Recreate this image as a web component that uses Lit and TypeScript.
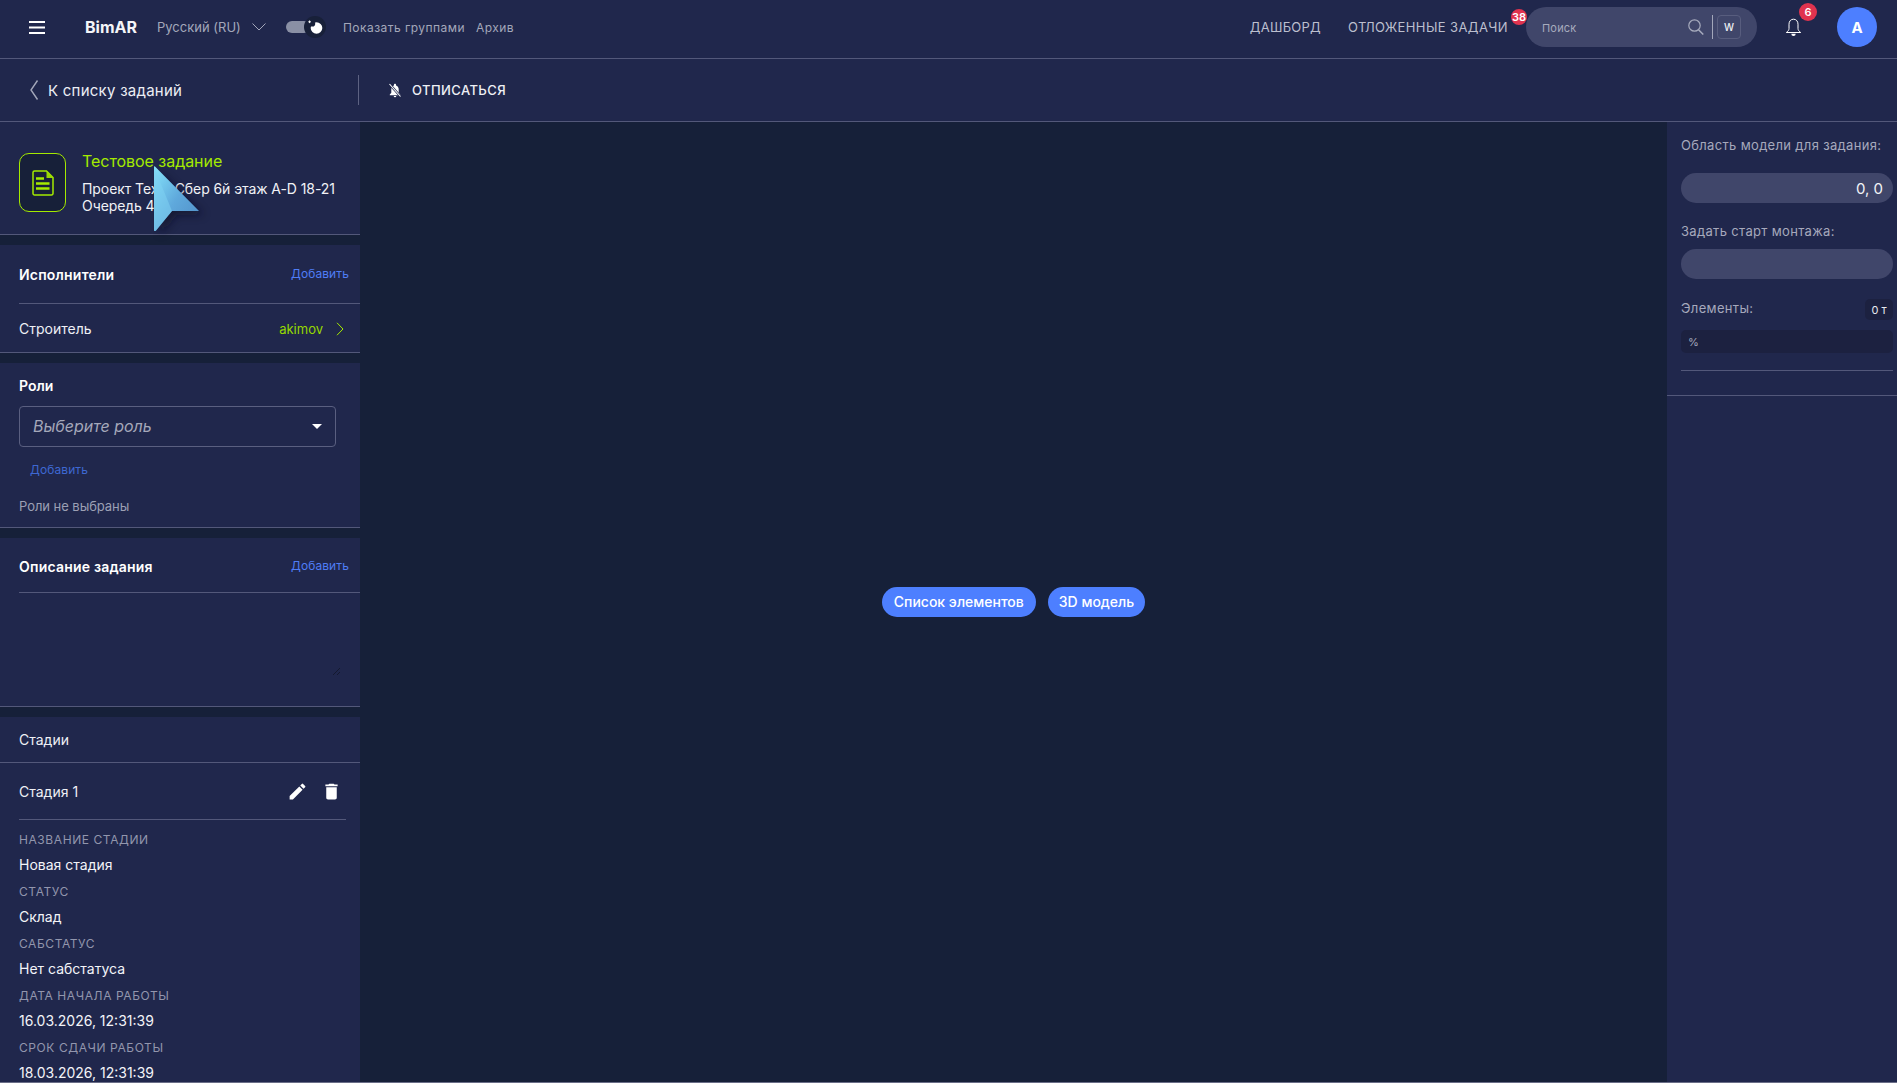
import { LitElement, html, css } from "lit";
import { customElement } from "lit/decorators.js";

@customElement("app-root")
export class AppRoot extends LitElement {
  static styles = css`
    :host { display: block; height: 1083px; overflow: hidden; position: relative; background: #162039; color: #fff; font-family: Inter, "Noto Sans", sans-serif; --panel: #20274c; --line: #53587a; --muted: #a3a7ba; --lime: #a4ea00; --blue: #4d7fff; }
    * { box-sizing: border-box; }
    svg { display: block; flex: none; }
    .top { height: 59px; background: var(--panel); border-bottom: 1px solid var(--line); display: flex; align-items: center; padding: 0 20px 4px 29px; }
    .brand { font-size: 16px; font-weight: 700; margin-left: 40px; width: 72px; color: #f4f5f8; }
    .lang { font-size: 13px; color: var(--muted); width: 95px; }
    .toggle { margin-left: 20px; width: 40px; height: 22px; position: relative; }
    .track { position: absolute; left: 0; top: 5px; width: 24px; height: 12px; border-radius: 6px; background: #8a90a5; }
    .knob { position: absolute; left: 18px; top: 0; width: 22px; height: 22px; border-radius: 50%; background: #182039; display: flex; align-items: center; justify-content: center; }
    .tl { font-size: 12px; color: var(--muted); letter-spacing: .45px; white-space: nowrap; }
    .tl.a { margin-left: 17px; } .tl.b { margin-left: 11px; }
    .sp { flex: 1; }
    .nav { font-size: 13px; color: #bcbfce; letter-spacing: .25px; white-space: nowrap; }
    .nav.two { margin-left: 27px; position: relative; letter-spacing: .4px; }
    .badge { position: absolute; background: #e0334f; color: #fff; font-weight: 600; border-radius: 50%; display: flex; align-items: center; justify-content: center; }
    .b38 { width: 16px; height: 16px; font-size: 11px; right: -19px; top: -10px; letter-spacing: 0; }
    .search { margin-left: 18px; width: 231px; height: 40px; border-radius: 20px; background: #40466a; display: flex; align-items: center; padding: 0 16px 0 16px; }
    .search span { font-size: 11px; color: #a7abbd; flex: 1; letter-spacing: .2px; padding-top: 2px; }
    .vr { width: 1px; height: 24px; background: #a3a7ba; margin: 0 4px 0 8px; }
    .w { width: 24px; height: 24px; border: 1px solid #585d7e; border-radius: 4px; font-size: 10px; font-weight: 500; display: flex; align-items: center; justify-content: center; color: #eceef3; }
    .bell { margin-left: 25px; position: relative; width: 22px; }
    .b6 { width: 18px; height: 18px; font-size: 11px; left: 17px; top: -15px; }
    .av { margin-left: 33px; width: 40px; height: 40px; border-radius: 50%; background: var(--blue); display: flex; align-items: center; justify-content: center; font-size: 15px; font-weight: 700; }
    .sub { height: 63px; background: var(--panel); border-bottom: 1px solid var(--line); display: flex; align-items: center; padding-left: 29px; }
    .back { display: flex; align-items: center; gap: 9px; width: 329px; font-size: 15px; color: #eceef4; letter-spacing: .25px; }
    .sep { width: 1px; height: 30px; background: #5d6282; }
    .unsub { margin-left: 29px; display: flex; align-items: center; gap: 10px; font-size: 13px; font-weight: 500; letter-spacing: .42px; color: #eef0f5; }
    .main { display: flex; height: 960px; }
    .foot { height: 1px; background: #6a6e88; }
    .left { width: 360px; flex: none; display: flex; flex-direction: column; gap: 10px; }
    .card { background: var(--panel); border-bottom: 1px solid var(--line); flex: none; }
    .task { height: 113px; display: flex; padding: 31px 0 0 19px; }
    .ticon { width: 47px; height: 59px; border: 1px solid var(--lime); border-radius: 10px; background: #172039; display: flex; align-items: center; justify-content: center; }
    .tinfo { margin: -1px 0 0 16px; }
    .tt { color: var(--lime); font-size: 16px; line-height: 18px; letter-spacing: -.05px; }
    .td { font-size: 14px; line-height: 17px; margin-top: 10px; color: #f1f2f6; letter-spacing: -.08px; }
    .hd { display: flex; justify-content: space-between; align-items: center; margin-left: 19px; padding-right: 11px; border-bottom: 1px solid var(--line); font-size: 14px; font-weight: 600; letter-spacing: .2px; }
    .hd i { font-style: normal; font-size: 12px; font-weight: 400; color: #4f7df5; letter-spacing: .1px; position: relative; top: -1px; }
    .exec .hd { height: 59px; }
    .row { height: 48px; display: flex; align-items: center; padding: 1px 16px 0 19px; font-size: 14px; color: #eef0f5; }
    .row b { margin-left: auto; font-weight: 400; color: #96d800; font-size: 13px; }
    .row svg { margin-left: 13px; }
    .roles { height: 165px; padding: 14px 0 0 19px; }
    .rt { font-size: 14px; font-weight: 600; line-height: 17px; }
    .sel { width: 317px; height: 41px; margin-top: 12px; border: 1px solid #5a5f80; border-radius: 4px; display: flex; align-items: center; justify-content: space-between; padding: 0 13px 1px; font-size: 16px; font-style: italic; color: #a5a8ba; }
    .caret { width: 0; height: 0; border: 5px solid transparent; border-top-color: #fff; border-bottom: 0; margin-top: 1px; }
    .add { font-size: 12px; color: #3e68d2; margin: 15px 0 0 11px; line-height: 15px; letter-spacing: .1px; }
    .none { font-size: 13px; line-height: 16px; color: #9ca0b4; margin-top: 21px; letter-spacing: -.05px; }
    .desc { height: 169px; }
    .desc .hd { height: 55px; padding-top: 3px; }
    .grip { margin: 74px 0 0 332px; }
    .stages { flex: 1; min-height: 0; background: var(--panel); overflow: hidden; }
    .sh { height: 46px; display: flex; align-items: center; padding-left: 19px; border-bottom: 1px solid var(--line); font-size: 14px; color: #eef0f5; }
    .s1 { height: 57px; margin: 0 14px 0 19px; border-bottom: 1px solid var(--line); display: flex; align-items: center; font-size: 14px; color: #eef0f5; padding-top: 1px; }
    .s1 svg:first-of-type { margin-left: auto; }
    .s1 .tr { margin: 0 4px 0 13px; }
    .f { padding-left: 19px; }
    .f span { display: block; }
    .l { font-size: 12px; letter-spacing: .58px; color: #9296ad; height: 24px; line-height: 24px; }
    .v { font-size: 14px; color: #f3f4f8; height: 28px; line-height: 25px; }
    .fs { padding-top: 8px; }
    .center { flex: 1; display: flex; justify-content: center; gap: 12px; padding: 465px 0 0 0; }
    .btn { height: 30px; border-radius: 15px; background: var(--blue); display: flex; align-items: center; padding: 0 12px 1px; font-size: 14px; font-weight: 500; }
    .btn.s { padding: 0 11px 1px; }
    .right { width: 230px; flex: none; background: var(--panel); }
    .rtop { height: 274px; border-bottom: 1px solid var(--line); padding: 14px 4px 0 14px; }
    .rl { font-size: 13px; line-height: 18px; color: #a6a9bc; letter-spacing: .33px; white-space: nowrap; }
    .pill { height: 30px; border-radius: 15px; background: #40466a; margin-top: 19px; padding-right: 10px; display: flex; align-items: center; justify-content: flex-end; font-size: 15px; color: #f2f3f7; }
    .pill.g { margin-top: 9px; }
    .rl.m { margin-top: 19px; }
    .el { display: flex; justify-content: space-between; align-items: flex-start; margin-top: 20px; height: 21px; }
    .ton { width: 28px; height: 21px; border-radius: 5px; background: #1c2140; font-size: 11px; display: flex; align-items: center; justify-content: center; color: #e8e9ef; }
    .pct { height: 23px; border-radius: 5px; background: #1c2140; margin-top: 10px; font-size: 11px; padding-left: 7px; display: flex; align-items: center; color: #a6a9bc; }
    .rule { height: 1px; background: var(--line); margin-top: 17px; }
    .cursor { position: absolute; left: 153px; top: 165px; }
  `;

  render() {
    const fields = [
      ["НАЗВАНИЕ СТАДИИ", "Новая стадия"],
      ["СТАТУС", "Склад"],
      ["САБСТАТУС", "Нет сабстатуса"],
      ["ДАТА НАЧАЛА РАБОТЫ", "16.03.2026, 12:31:39"],
      ["СРОК СДАЧИ РАБОТЫ", "18.03.2026, 12:31:39"],
    ];
    return html`
      <div class="top">
        <svg width="16" height="13" viewBox="0 0 16 13"><path d="M0 1h16M0 6.500h16M0 12h16" stroke="#fff" stroke-width="1.800"/></svg>
        <div class="brand">BimAR</div>
        <div class="lang">Русский (RU)</div>
        <svg width="14" height="8" viewBox="0 0 14 8"><path d="M.5.5 7 7l6.500-6.500" fill="none" stroke="#a3a7ba" stroke-width="1"/></svg>
        <div class="toggle"><div class="track"></div><div class="knob">
          <svg width="18" height="18" viewBox="0 0 18 18"><circle cx="10.500" cy="10" r="5.800" fill="#fff"/><circle cx="6.400" cy="5.800" r="2.800" fill="#182039"/><path d="M3.600 2.500v2.600M2.300 3.800h2.600" stroke="#fff" stroke-width="1"/></svg>
        </div></div>
        <span class="tl a">Показать группами</span>
        <span class="tl b">Архив</span>
        <div class="sp"></div>
        <span class="nav">ДАШБОРД</span>
        <span class="nav two">ОТЛОЖЕННЫЕ ЗАДАЧИ<span class="badge b38">38</span></span>
        <div class="search">
          <span>Поиск</span>
          <svg width="16" height="16" viewBox="0 0 16 16"><circle cx="6.500" cy="6.500" r="5.700" fill="none" stroke="#a7abbd" stroke-width="1.200"/><path d="m10.500 10.700 4.800 4.800" stroke="#a7abbd" stroke-width="1.500"/></svg>
          <div class="vr"></div>
          <div class="w">W</div>
        </div>
        <div class="bell">
          <svg width="17" height="19" viewBox="0 0 17 19" style="margin:0 auto"><path d="M8.500 1.200c-2.800 0-4.500 2.200-4.500 5v4.300c0 1.500-1 2.800-2.700 4h14.400c-1.700-1.200-2.700-2.500-2.700-4V6.200c0-2.800-1.700-5-4.500-5z" fill="none" stroke="#fff" stroke-width="1"/><path d="M6.300 15.800h4.400a2.200 2.200 0 0 1-4.400 0z" fill="#fff"/></svg>
          <span class="badge b6">6</span>
        </div>
        <div class="av">A</div>
      </div>
      <div class="sub">
        <div class="back">
          <svg width="10" height="20" viewBox="0 0 10 20"><path d="M8.500 .5 2 10l6.500 9.500" fill="none" stroke="#a3a7ba" stroke-width="1.400"/></svg>
          <span>К списку заданий</span>
        </div>
        <div class="sep"></div>
        <div class="unsub">
          <svg width="14" height="15" viewBox="0 0 14 15"><path d="M7 .8c-.6 0-1 .4-1 1v.6C4.300 2.900 3.300 4.400 3.300 6.200v3.500L1.800 11.500v.7h10.400v-.7l-1.500-1.800V6.200c0-1.800-1-3.300-2.700-3.800v-.6c0-.6-.4-1-1-1zM5.700 13a1.300 1.300 0 0 0 2.600 0z" fill="#fff"/><path d="m1.500 1 11 12.500" stroke="#20274c" stroke-width="2.400"/><path d="m1.500 1 11 12.500" stroke="#fff" stroke-width="1.100"/></svg>
          <span>ОТПИСАТЬСЯ</span>
        </div>
      </div>
      <div class="main">
        <div class="left">
          <div class="card task">
            <div class="ticon">
              <svg width="22" height="26" viewBox="0 0 22 26"><path d="M2.500 1h12L21 7.500v16a1.500 1.500 0 0 1-1.500 1.500h-17A1.500 1.500 0 0 1 1 23.500v-21A1.500 1.500 0 0 1 2.500 1z" fill="none" stroke="#a4ea00" stroke-width="1.500"/><path d="M14.500 1.500V8H21z" fill="#a4ea00" opacity=".9"/><path d="M4 8.500h8M4 13.500h13.500M4 18.500h13.500" stroke="#a4ea00" stroke-width="2.400"/></svg>
            </div>
            <div class="tinfo">
              <div class="tt">Тестовое задание</div>
              <div class="td">Проект ТехноСбер 6й этаж A-D 18-21<br>Очередь 4</div>
            </div>
          </div>
          <div class="card exec">
            <div class="hd"><span>Исполнители</span><i>Добавить</i></div>
            <div class="row">Строитель<b>akimov</b>
              <svg width="8" height="14" viewBox="0 0 8 14"><path d="m1 .8 6 6.200-6 6.200" fill="none" stroke="#a4ea00" stroke-width="1"/></svg>
            </div>
          </div>
          <div class="card roles">
            <div class="rt">Роли</div>
            <div class="sel"><span>Выберите роль</span><div class="caret"></div></div>
            <div class="add">Добавить</div>
            <div class="none">Роли не выбраны</div>
          </div>
          <div class="card desc">
            <div class="hd"><span>Описание задания</span><i>Добавить</i></div>
            <svg class="grip" width="9" height="9" viewBox="0 0 9 9"><path d="M8 1 1 8M8 5 5 8" stroke="#14192f" stroke-width="1"/></svg>
          </div>
          <div class="stages">
            <div class="sh">Стадии</div>
            <div class="s1">
              <span>Стадия 1</span>
              <svg width="21" height="21" viewBox="0 0 24 24"><path d="M3 17.250V21h3.750L17.810 9.940l-3.750-3.750zM20.710 7.040a1 1 0 0 0 0-1.410l-2.340-2.340a1 1 0 0 0-1.410 0l-1.830 1.830 3.750 3.750z" fill="#fff"/></svg>
              <svg class="tr" width="21" height="21" viewBox="0 0 24 24"><path d="M6 19c0 1.100.9 2 2 2h8c1.100 0 2-.9 2-2V7H6zM19 4h-3.500l-1-1h-5l-1 1H5v2h14z" fill="#fff"/></svg>
            </div>
            <div class="fs">
              ${fields.map(([l, v]) => html`<div class="f"><span class="l">${l}</span><span class="v">${v}</span></div>`)}
            </div>
          </div>
        </div>
        <div class="center">
          <div class="btn">Список элементов</div>
          <div class="btn s">3D модель</div>
        </div>
        <div class="right">
          <div class="rtop">
            <div class="rl">Область модели для задания:</div>
            <div class="pill">0, 0</div>
            <div class="rl m">Задать старт монтажа:</div>
            <div class="pill g"></div>
            <div class="el"><span class="rl">Элементы:</span><span class="ton">0 т</span></div>
            <div class="pct">%</div>
            <div class="rule"></div>
          </div>
        </div>
      </div>
      <div class="foot"></div>
      <svg class="cursor" width="62" height="78" viewBox="0 0 62 78">
        <defs>
          <linearGradient id="cg" x1="0" y1="0" x2="1" y2="1"><stop offset="0" stop-color="#86e4fb"/><stop offset=".5" stop-color="#5fa9dc"/><stop offset="1" stop-color="#4f8cc6"/></linearGradient>
          <filter id="cs" x="-30%" y="-30%" width="170%" height="170%"><feGaussianBlur stdDeviation="4"/></filter>
        </defs>
        <path d="M1 2 46 46 19 46 2 66z" fill="#0b1022" opacity=".55" filter="url(#cs)" transform="translate(5 4)"/>
        <path d="M1 2c0-.5.5-1 1-.5L46 46 19 46 3 65.500c-1 1-2 .5-2-.5z" fill="url(#cg)"/>
        <path d="M1 2 19 46 3 65.500c-1 1-2 .5-2-.5z" fill="#7fd2f2" opacity=".55"/>
      </svg>
    `;
  }
}
